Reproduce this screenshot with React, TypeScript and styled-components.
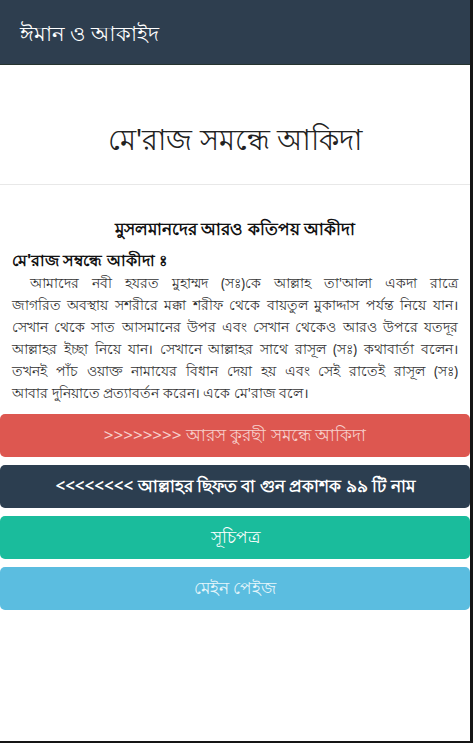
import React from "react"
import styled, { createGlobalStyle } from "styled-components"

const GlobalStyle = createGlobalStyle`
  html, body {
    margin: 0;
    padding: 0;
    background: #151515;
  }
  body {
    font-family: "Noto Sans", "DejaVu Sans", sans-serif;
  }
`

const Screen = styled.div`
  width: 470px;
  height: 741px;
  background: #ffffff;
  display: flex;
  flex-direction: column;
  overflow: hidden;
`

const TopBar = styled.header`
  height: 65px;
  background: #2e3e4f;
  display: flex;
  align-items: center;
  padding: 0 20px;
  box-sizing: border-box;
  border-bottom: 1px solid #26332f;
`

const BarTitle = styled.h1`
  margin: 0;
  color: #ffffff;
  font-size: 21px;
  font-weight: 400;
  margin-top: 6px;
`

const PageHeading = styled.div`
  height: 119px;
  display: flex;
  align-items: center;
  justify-content: center;
  border-bottom: 1px solid #e8e8e8;
`

const HeadingText = styled.h2`
  margin: 0;
  padding-top: 34px;
  font-size: 29px;
  font-weight: 400;
  color: #222222;
`

const Article = styled.section`
  padding: 32px 12px 0 12px;
  color: #2a2a2a;
`

const ArticleTitle = styled.h3`
  margin: 0;
  text-align: center;
  font-size: 17px;
  font-weight: 700;
  line-height: 24px;
  color: #111;
`

const ArticleSub = styled.h4`
  margin: 7px 0 0 0;
  font-size: 16px;
  font-weight: 700;
  line-height: 24px;
  color: #111;
`

const Line = styled.div<{ $indent?: boolean; $last?: boolean }>`
  font-size: 13.5px;
  line-height: 22px;
  white-space: nowrap;
  text-align: ${({ $last }) => ($last ? "left" : "justify")};
  text-align-last: ${({ $last }) => ($last ? "left" : "justify")};
  padding-left: ${({ $indent }) => ($indent ? "18px" : "0")};
  color: #333;
`

const ButtonStack = styled.nav`
  display: flex;
  flex-direction: column;
  gap: 8px;
  margin-top: 10px;
`

const NavButton = styled.button<{ $bg: string; $fg: string; $bold?: boolean }>`
  height: 43px;
  width: 100%;
  border: none;
  border-radius: 5px;
  background: ${({ $bg }) => $bg};
  color: ${({ $fg }) => $fg};
  font-family: inherit;
  font-size: 17px;
  font-weight: ${({ $bold }) => ($bold ? 600 : 400)};
  display: flex;
  align-items: center;
  justify-content: center;
  cursor: pointer;
`

const paragraph = [
  "আমাদের নবী হযরত মুহাম্মদ (সঃ)কে আল্লাহ তা'আলা একদা রাত্রে",
  "জাগরিত অবস্থায় সশরীরে মক্কা শরীফ থেকে বায়তুল মুকাদ্দাস পর্যন্ত নিয়ে যান।",
  "সেখান থেকে সাত আসমানের উপর এবং সেখান থেকেও আরও উপরে যতদূর",
  "আল্লাহর ইচ্ছা নিয়ে যান। সেখানে আল্লাহর সাথে রাসূল (সঃ) কথাবার্তা বলেন।",
  "তখনই পাঁচ ওয়াক্ত নামাযের বিধান দেয়া হয় এবং সেই রাতেই রাসূল (সঃ)",
  "আবার দুনিয়াতে প্রত্যাবর্তন করেন। একে মে'রাজ বলে।",
]

const buttons = [
  { label: ">>>>>>>> আরস কুরছী সমন্ধে আকিদা", bg: "#dd5750", fg: "#f7d0cc" },
  { label: "<<<<<<<< আল্লাহর ছিফত বা গুন প্রকাশক ৯৯ টি নাম", bg: "#2c3e50", fg: "#ffffff", bold: true },
  { label: "সূচিপত্র", bg: "#1abc9c", fg: "#ffffff" },
  { label: "মেইন পেইজ", bg: "#5bbde0", fg: "#e6f6fb" },
]

export default function App() {
  return (
    <>
      <GlobalStyle />
      <Screen>
        <TopBar>
          <BarTitle>ঈমান ও আকাইদ</BarTitle>
        </TopBar>
        <PageHeading>
          <HeadingText>মে'রাজ সমন্ধে আকিদা</HeadingText>
        </PageHeading>
        <Article>
          <ArticleTitle>মুসলমানদের আরও কতিপয় আকীদা</ArticleTitle>
          <ArticleSub>মে'রাজ সম্বন্ধে আকীদা{"\u00A0"}ঃ</ArticleSub>
          {paragraph.map((text, i) => (
            <Line key={i} $indent={i === 0} $last={i === paragraph.length - 1}>
              {text}
            </Line>
          ))}
        </Article>
        <ButtonStack>
          {buttons.map((b) => (
            <NavButton key={b.label} $bg={b.bg} $fg={b.fg} $bold={b.bold}>
              {b.label}
            </NavButton>
          ))}
        </ButtonStack>
      </Screen>
    </>
  )
}
